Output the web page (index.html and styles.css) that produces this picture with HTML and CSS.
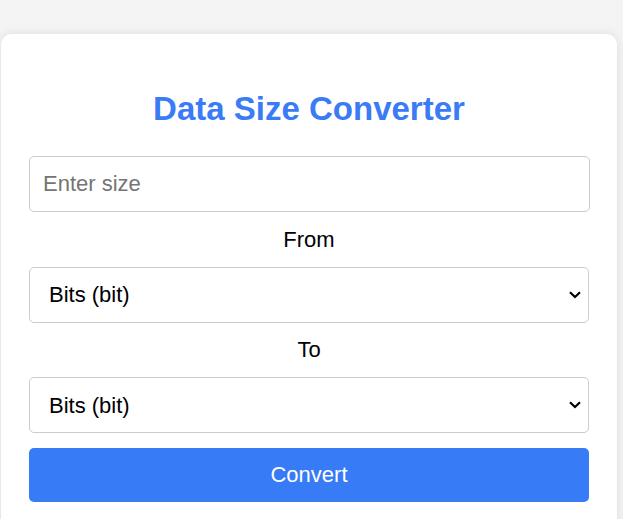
FILE: index.html
```html
<!DOCTYPE html>
<html lang="en">
<head>
<meta charset="utf-8">
<title>Data Size Converter</title>
<link rel="stylesheet" href="styles.css">
</head>
<body>
<div class="card">
  <h1 class="title">Data Size Converter</h1>
  <div class="form">
    <input class="field field-input" type="text" placeholder="Enter size">
    <label class="label" for="from">From</label>
    <select class="field field-select" id="from">
      <option>Bits (bit)</option>
      <option>Bytes (B)</option>
      <option>Kilobytes (KB)</option>
      <option>Megabytes (MB)</option>
      <option>Gigabytes (GB)</option>
      <option>Terabytes (TB)</option>
    </select>
    <label class="label" for="to">To</label>
    <select class="field field-select" id="to">
      <option>Bits (bit)</option>
      <option>Bytes (B)</option>
      <option>Kilobytes (KB)</option>
      <option>Megabytes (MB)</option>
      <option>Gigabytes (GB)</option>
      <option>Terabytes (TB)</option>
    </select>
    <button class="btn" type="button">Convert</button>
  </div>
</div>
</body>
</html>
```

FILE: styles.css
```css
html, body {
  margin: 0;
  padding: 0;
}

body {
  background: #f4f4f4;
  font-family: "Liberation Sans", Arial, sans-serif;
  font-size: 22px;
  color: #111;
  padding-top: 34px;
  overflow: hidden;
}

.card {
  box-sizing: border-box;
  margin-left: 1px;
  width: 616px;
  background: #fff;
  border-radius: 11px;
  box-shadow: 0 0 11px rgba(0, 0, 0, 0.1);
  padding: 56px 28px 40px;
}

.title {
  margin: 0 0 28px;
  font-size: 33px;
  line-height: 38px;
  font-weight: bold;
  color: #3a7bf6;
  text-align: center;
}

.form {
  display: flex;
  flex-direction: column;
  gap: 14.8px;
}

.field {
  box-sizing: border-box;
  width: 100%;
  height: 56px;
  margin: 0;
  padding: 0 13px;
  border: 1px solid #cccccc;
  border-radius: 5px;
  background-color: #fff;
  font-family: inherit;
  font-size: 22px;
  color: #000;
}

.field-input {
  width: calc(100% + 1px);
  outline: none;
}

.field-input::placeholder {
  color: #757575;
}

.field-select {
  -webkit-appearance: none;
  appearance: none;
  padding: 0 34px 0 19px;
  background-image: url("data:image/svg+xml,%3Csvg xmlns='http://www.w3.org/2000/svg' width='12' height='8' viewBox='0 0 12 8'%3E%3Cpath d='M1 1.2 L6 6 L11 1.2' fill='none' stroke='%23000' stroke-width='2.2'/%3E%3C/svg%3E");
  background-repeat: no-repeat;
  background-position: right 7.5px center;
  background-size: 12px 8px;
}

.label {
  display: block;
  text-align: center;
  line-height: 25px;
  color: #000;
}

.btn {
  box-sizing: border-box;
  width: 100%;
  height: 54px;
  margin: 0;
  border: none;
  border-radius: 5px;
  background: #377bf6;
  color: #fff;
  font-family: inherit;
  font-size: 22px;
  cursor: pointer;
}
```
